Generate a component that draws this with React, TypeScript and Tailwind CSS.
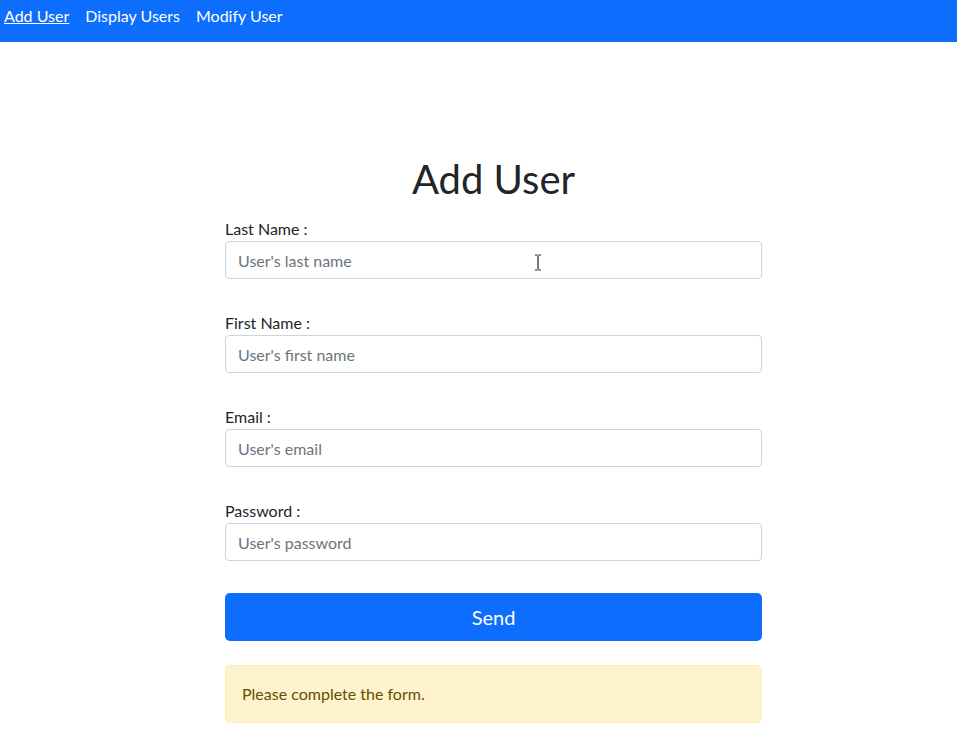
import React, { useState } from 'react';

const fields = [
  { label: 'Last Name :', placeholder: "User's last name", type: 'text' },
  { label: 'First Name :', placeholder: "User's first name", type: 'text' },
  { label: 'Email :', placeholder: "User's email", type: 'email' },
  { label: 'Password :', placeholder: "User's password", type: 'password' },
];

const App: React.FC = () => {
  const [active, setActive] = useState('Add User');

  return (
    <div className="min-h-screen bg-white text-[#212529] font-['Lato',sans-serif]">
      <nav className="h-[42px] bg-[#0d6efd] flex items-start gap-4 pl-1 pt-[4px]">
        {['Add User', 'Display Users', 'Modify User'].map((l) => (
          <a
            key={l}
            href="#"
            onClick={() => setActive(l)}
            className={`text-white text-base leading-6 ${active === l ? 'underline' : 'no-underline'}`}
          >
            {l}
          </a>
        ))}
      </nav>

      <div className="w-[537px] ml-[225px] pt-[113px]">
        <h1 className="text-[40px] leading-[48px] text-center mb-[14px]">Add User</h1>
        <form className="flex flex-col gap-8" onSubmit={(e) => e.preventDefault()}>
          {fields.map((f, i) => (
            <div key={f.label} className="relative flex flex-col">
              <label className="text-base leading-6">{f.label}</label>
              <input
                type={f.type}
                placeholder={f.placeholder}
                className="h-[38px] border border-[#ced4da] rounded px-3 text-base placeholder:text-[#6c757d] outline-none"
              />
              {i === 0 && (
                <svg className="absolute left-[309px] top-[37px]" width="8" height="17" viewBox="0 0 8 17">
                  <path d="M1 1h2.5M4.5 1H7M4 1.5v14M1 16h2.5M4.5 16H7" stroke="#222" strokeWidth="1.2" fill="none" />
                </svg>
              )}
            </div>
          ))}
          <button type="submit" className="h-12 bg-[#0d6efd] text-white text-xl rounded-[5px]">
            Send
          </button>
        </form>
        <div className="mt-6 h-[58px] bg-[#fff3cd] border border-[#ffecb5] rounded-[5px] px-4 flex items-center text-[#664d03] text-base">
          Please complete the form.
        </div>
      </div>
    </div>
  );
};

export default App;
